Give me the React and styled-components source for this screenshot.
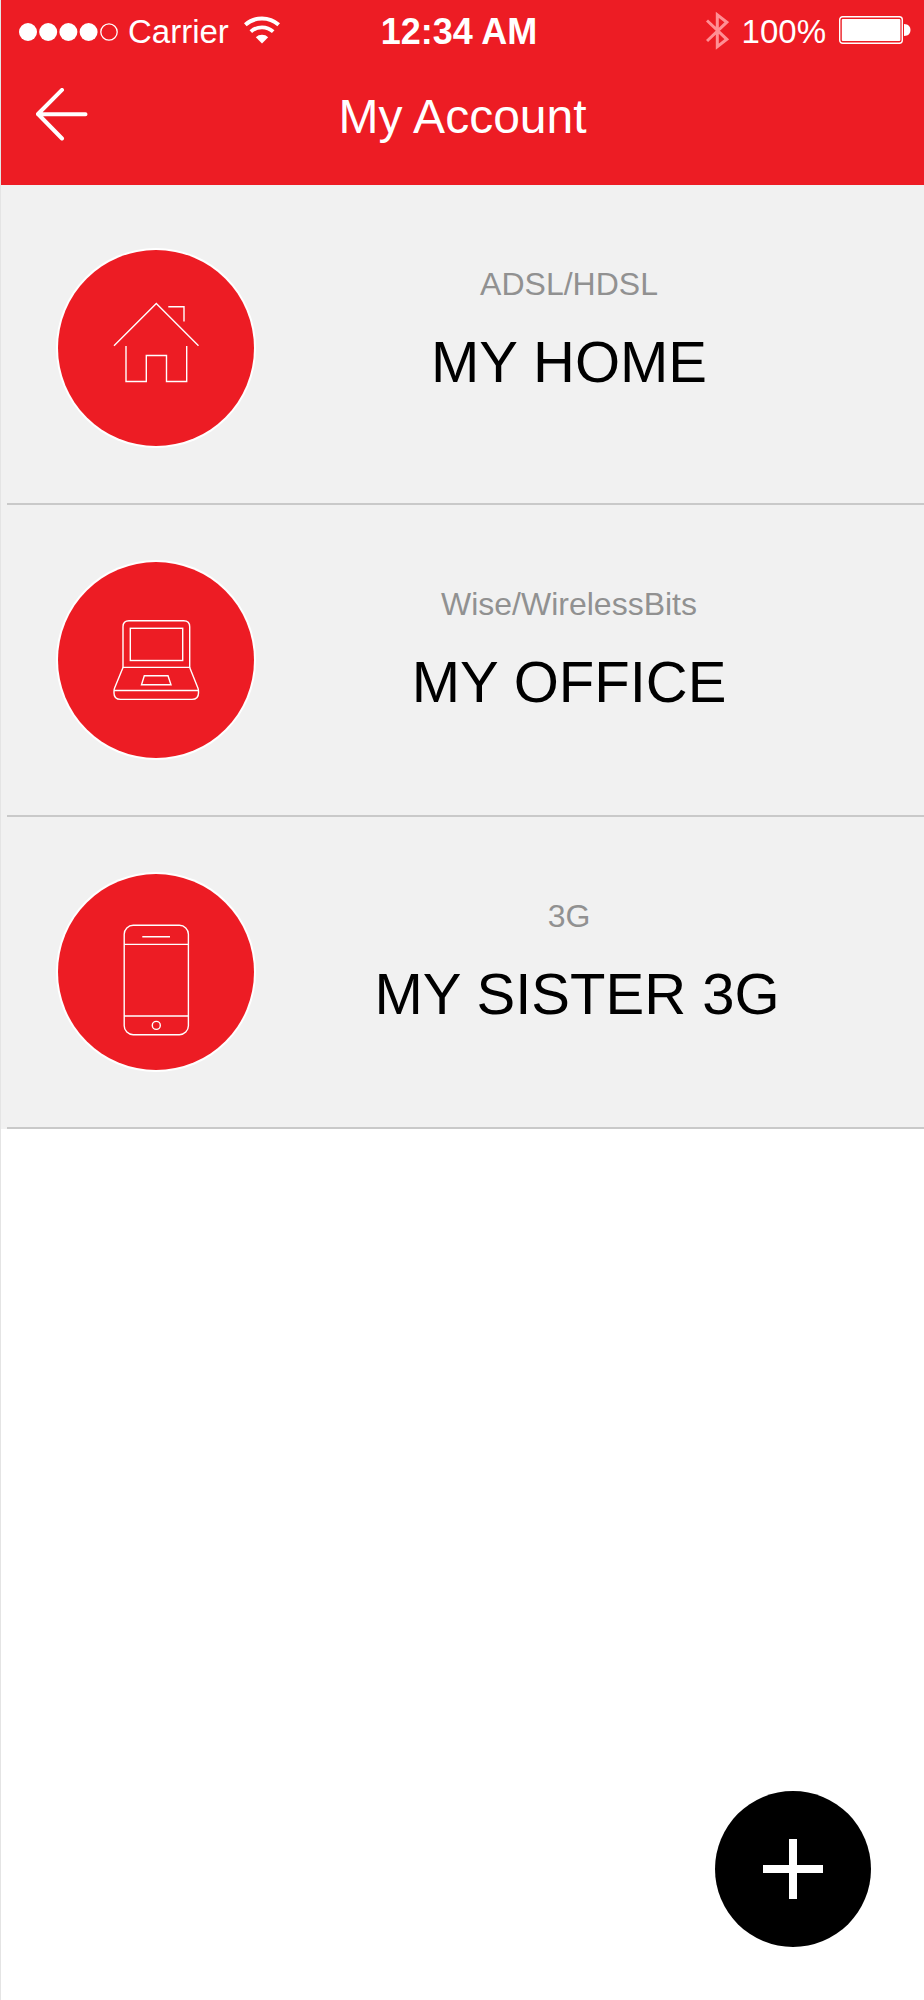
import React from "react";
import styled, { createGlobalStyle } from "styled-components";

const GlobalStyle = createGlobalStyle`
  *, *::before, *::after { box-sizing: border-box; }
  body { margin: 0; background: #fff; }
  h1, h2, p, ul { margin: 0; padding: 0; font-weight: 400; }
  button { border: 0; padding: 0; cursor: pointer; }
  svg { display: block; flex: none; }
`;

const Screen = styled.div`
  min-height: 100vh;
  border-left: 1px solid #e4e4e4;
  background: #fff;
  color: #000;
  font-family: "Liberation Sans", Arial, sans-serif;
`;

const Header = styled.header`
  padding-bottom: 15px;
  background: #ed1c24;
  color: #fff;
`;

const StatusBar = styled.div`
  display: grid;
  grid-template-columns: 1fr auto 1fr;
  align-items: center;
  height: 64px;
  padding: 0 13px 0 6px;
  font-size: 33px;
`;

const StatusGroup = styled.div`
  display: flex;
  align-items: center;
  justify-content: ${(p) => (p.$end ? "flex-end" : "flex-start")};
  gap: ${(p) => (p.$end ? "13px" : "9px")};
  padding-left: 12px;
`;

const Carrier = styled.span`
  margin-right: 6px;
`;

const Clock = styled.time`
  font-size: 36px;
  font-weight: 700;
`;

const TitleBar = styled.div`
  display: grid;
  grid-template-columns: 1fr auto 1fr;
  align-items: center;
  height: 106px;
  padding: 0 34px;
`;

const BackButton = styled.button`
  justify-self: start;
  background: none;
  color: inherit;
`;

const Title = styled.h1`
  font-size: 48px;
  line-height: 56px;
`;

const AccountList = styled.ul`
  list-style: none;
  background: #f1f1f1;
`;

const Badge = styled.div`
  flex: none;
  width: 196px;
  height: 196px;
  border-radius: 50%;
  background: #ed1c24;
  box-shadow: 0 0 0 2px #fff;
`;

const AccountRow = styled.li`
  display: flex;
  align-items: center;
  min-height: 312px;
  margin-left: 6px;
  padding: 0 40px 0 51px;
  border-bottom: 2px solid #c9c9c9;

  &:first-child {
    min-height: 320px;
  }

  &:first-child ${Badge} {
    margin-top: 8px;
  }
`;

const AccountText = styled.div`
  flex: 1;
  display: flex;
  flex-direction: column;
  align-self: flex-start;
  gap: 26px;
  padding-top: 79px;
  text-align: center;
`;

const Service = styled.p`
  color: #919191;
  font-size: 32px;
  line-height: 40px;
`;

const AccountName = styled.h2`
  padding-left: ${(p) => (p.$indented ? "16px" : "0")};
  font-size: 58px;
  line-height: 64px;
`;

const AddButton = styled.button`
  position: fixed;
  right: 53px;
  bottom: 53px;
  display: grid;
  place-items: center;
  width: 156px;
  height: 156px;
  border-radius: 50%;
  background: #000;
  color: #fff;
`;

const SignalIcon = () => (
  <svg width="100" height="20" viewBox="0 0 100 20" role="img" aria-label="Signal 4 of 5">
    {[9, 29.2, 49.4, 69.6].map((x) => (
      <circle key={x} cx={x} cy="10" r="9" fill="#fff" />
    ))}
    <circle cx="90" cy="10" r="8.2" fill="none" stroke="#fff" strokeWidth="1.3" />
  </svg>
);

const WifiIcon = () => (
  <svg width="36" height="32" viewBox="0 0 36 32" fill="none" stroke="#fff" aria-hidden="true">
    <path d="M1.3 8.8A25 25 0 0 1 34.7 8.8" strokeWidth="4" />
    <path d="M6.8 15.6A16.8 16.8 0 0 1 29.2 15.6" strokeWidth="3.8" />
    <path d="M18 27.5 11.8 21.3A9 9 0 0 1 24.2 21.3Z" fill="#fff" stroke="none" />
  </svg>
);

const BluetoothIcon = () => (
  <svg width="23" height="42" viewBox="0 0 23 42" aria-hidden="true">
    <path
      d="M1 9.5 20.8 28.3 11.3 35.6V3.8L20.8 11.2 1 30"
      fill="none"
      stroke="#ff8f94"
      strokeWidth="3"
      strokeMiterlimit="6"
    />
  </svg>
);

const BatteryIcon = () => (
  <svg width="72" height="32" viewBox="0 0 72 32" aria-hidden="true">
    <rect x="0.7" y="0.7" width="62.6" height="26.6" rx="3" fill="none" stroke="#fff" strokeWidth="1.4" />
    <rect x="2.8" y="3" width="58.6" height="22" rx="1" fill="#fff" />
    <path d="M65 8C69.500 8 71.500 11 71.500 14S69.500 20 65 20Z" fill="#fff" />
  </svg>
);

const BackIcon = () => (
  <svg width="53" height="58" viewBox="0 0 53 58" fill="none" stroke="#fff" strokeWidth="4" strokeLinecap="round" strokeLinejoin="round" aria-hidden="true">
    <path d="M27 1.900 3 26 27 50.500M3 26.200H50.500" />
  </svg>
);

const PlusIcon = () => (
  <svg width="60" height="60" viewBox="0 0 60 60" aria-hidden="true">
    <path d="M30 0V60M0 30H60" stroke="#fff" strokeWidth="8" />
  </svg>
);

const BadgeDrawing = ({ children }) => (
  <svg width="196" height="196" viewBox="0 0 196 196" fill="none" stroke="#fff" strokeWidth="1.4" aria-hidden="true">
    {children}
  </svg>
);

const HomeIcon = () => (
  <BadgeDrawing>
    <path d="M56 95.700 98.300 53.400 140.500 95.700" />
    <path d="M110.300 56.700H126V71.500" />
    <path d="M68 96V131.500H88.300V105.500H108.500V131.500H128.700V96" />
  </BadgeDrawing>
);

const LaptopIcon = () => (
  <BadgeDrawing>
    <path d="M65 105.400V64.700Q65 58.700 71 58.700H125.700Q131.700 58.700 131.700 64.700V105.400Z" />
    <rect x="72.300" y="66.300" width="52.400" height="32.200" />
    <path d="M65 105.400 56.600 126Q56 127.500 56 129V131Q56 137.400 62.500 137.400H134Q140.500 137.400 140.500 131V129Q140.500 127.500 139.900 126L131.700 105.400" />
    <path d="M56 128.500H140.500" />
    <path d="M86.300 113.700H110L113 122.800H83.500Z" />
  </BadgeDrawing>
);

const PhoneIcon = () => (
  <BadgeDrawing>
    <rect x="66.200" y="51.300" width="64.200" height="109.400" rx="9" />
    <path d="M66.200 70.400H130.400M66.200 142H130.400M84.300 62.700H112" />
    <circle cx="98.300" cy="151.400" r="4" />
  </BadgeDrawing>
);

const accounts = [
  { service: "ADSL/HDSL", name: "MY HOME", Icon: HomeIcon },
  { service: "Wise/WirelessBits", name: "MY OFFICE", Icon: LaptopIcon },
  { service: "3G", name: "MY SISTER 3G", Icon: PhoneIcon, indented: true },
];

export default function App() {
  return (
    <>
      <GlobalStyle />
      <Screen>
        <Header>
          <StatusBar>
            <StatusGroup>
              <SignalIcon />
              <Carrier>Carrier</Carrier>
              <WifiIcon />
            </StatusGroup>
            <Clock>12:34 AM</Clock>
            <StatusGroup $end>
              <BluetoothIcon />
              <span>100%</span>
              <BatteryIcon />
            </StatusGroup>
          </StatusBar>
          <TitleBar>
            <BackButton type="button" aria-label="Back">
              <BackIcon />
            </BackButton>
            <Title>My Account</Title>
          </TitleBar>
        </Header>
        <main>
          <AccountList>
            {accounts.map(({ service, name, Icon, indented }) => (
              <AccountRow key={name}>
                <Badge>
                  <Icon />
                </Badge>
                <AccountText>
                  <Service>{service}</Service>
                  <AccountName $indented={indented}>{name}</AccountName>
                </AccountText>
              </AccountRow>
            ))}
          </AccountList>
        </main>
        <AddButton type="button" aria-label="Add account">
          <PlusIcon />
        </AddButton>
      </Screen>
    </>
  );
}
